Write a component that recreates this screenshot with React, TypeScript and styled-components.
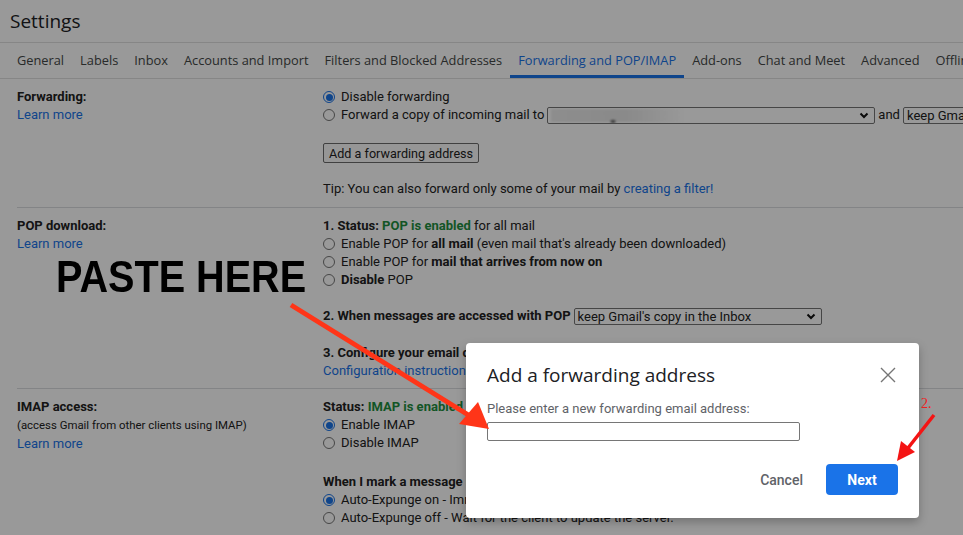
import React from 'react';
import styled, { createGlobalStyle } from 'styled-components';

const GlobalStyle = createGlobalStyle`
  html, body {
    margin: 0;
    padding: 0;
  }
  body {
    font-family: Roboto, "Liberation Sans", Arial, sans-serif;
  }
`;

const Page = styled.div`
  position: relative;
  width: 963px;
  height: 535px;
  overflow: hidden;
  background: #fff;
  color: #222;
  font-size: 13px;
`;

const TitleBar = styled.header`
  height: 42px;
  display: flex;
  align-items: center;
  padding-left: 10px;
  font-family: "Open Sans", sans-serif;
  font-size: 19px;
  color: #202124;
  border-bottom: 1px solid #e0e0e0;
`;

const TabBar = styled.nav`
  display: flex;
  height: 35px;
  padding-left: 9px;
  border-bottom: 1px solid #e0e0e0;
  white-space: nowrap;
`;

const Tab = styled.div<{ $active?: boolean }>`
  display: flex;
  align-items: center;
  padding: 0 8px;
  font-family: "Open Sans", sans-serif;
  font-size: 12.8px;
  color: ${({ $active }) => ($active ? '#1a73e8' : '#444746')};
  border-bottom: 3px solid ${({ $active }) => ($active ? '#1a73e8' : 'transparent')};
  border-top: 2px solid transparent;
`;

const Section = styled.section<{ $top: number; $bottom: number }>`
  display: grid;
  grid-template-columns: 306px 1fr;
  margin-left: 17px;
  padding: ${({ $top, $bottom }) => `${$top}px 0 ${$bottom}px`};
  border-bottom: 1px solid #dadce0;
  line-height: 18px;
  white-space: nowrap;
`;

const Label = styled.div`
  font-weight: bold;
`;

const Note = styled.div`
  font-size: 11.4px;
  line-height: 19px;
`;

const Link = styled.a`
  color: #1a73e8;
  text-decoration: none;
`;

const Green = styled.b`
  color: #1e8e3e;
`;

const Block = styled.div<{ $gap?: number }>`
  margin-top: ${({ $gap }) => $gap || 0}px;
`;

const Option = styled.div`
  display: flex;
  align-items: center;
  height: 18px;
`;

const Radio = styled.span<{ $checked?: boolean }>`
  position: relative;
  flex: none;
  width: 12px;
  height: 12px;
  box-sizing: border-box;
  margin-right: 6px;
  border-radius: 50%;
  background: #fff;
  border: ${({ $checked }) => ($checked ? '1.5px solid #1a73e8' : '1px solid #767676')};

  &::after {
    content: '';
    display: ${({ $checked }) => ($checked ? 'block' : 'none')};
    position: absolute;
    inset: 1.5px;
    border-radius: 50%;
    background: #1a73e8;
  }
`;

const Select = styled.span<{ $width: number }>`
  display: inline-flex;
  align-items: center;
  justify-content: space-between;
  vertical-align: middle;
  box-sizing: border-box;
  width: ${({ $width }) => $width}px;
  height: 17px;
  margin: 0 3px 0 3px;
  padding: 0 5px 0 3px;
  border: 1px solid #767676;
  border-radius: 2px;
  background: #fff;
  font-size: 13px;
  line-height: 15px;
  overflow: hidden;
`;

const Redacted = styled.span`
  position: relative;
  width: 135px;
  height: 13px;
  background: linear-gradient(90deg, #ececec, #e6e6e6 55%, rgba(240, 240, 240, 0));
  filter: blur(1px);

  &::after {
    content: '';
    position: absolute;
    left: 58px;
    bottom: -1px;
    width: 8px;
    height: 3px;
    background: radial-gradient(circle, #666 40%, transparent 70%);
  }
`;

const Button = styled.button`
  height: 20px;
  padding: 0 5px;
  border: 1px solid #6b6b6b;
  border-radius: 2px;
  background: #fafafa;
  color: #222;
  font-family: Roboto, sans-serif;
  font-size: 12.6px;
`;

const PasteHere = styled.div`
  position: relative;
  z-index: 2;
  margin: 2px 0 0 39px;
  font-family: "Liberation Sans", Arial, sans-serif;
  font-weight: bold;
  font-size: 44px;
  line-height: 44px;
  color: #000;
  transform: scaleX(0.9);
  transform-origin: left center;
`;

const Backdrop = styled.div`
  position: absolute;
  inset: 0;
  z-index: 1;
  background: rgba(0, 0, 0, 0.4);
`;

const Dialog = styled.div`
  position: absolute;
  left: 466px;
  top: 343px;
  z-index: 3;
  width: 453px;
  height: 175px;
  box-sizing: border-box;
  padding: 20px 23px 0 21px;
  display: flex;
  flex-direction: column;
  background: #fff;
  border-radius: 4px;
  box-shadow: 0 4px 10px rgba(0, 0, 0, 0.25);
`;

const DialogHead = styled.div`
  display: flex;
  align-items: center;
  justify-content: space-between;
  height: 24px;
`;

const DialogTitle = styled.h2`
  margin: 0;
  font-family: "Open Sans", sans-serif;
  font-weight: normal;
  font-size: 19px;
  color: #202124;
`;

const DialogLabel = styled.div`
  margin-top: 13px;
  font-size: 13px;
  line-height: 18px;
  color: #5f6368;
`;

const TextInput = styled.input`
  display: block;
  width: 313px;
  height: 19px;
  margin-top: 4px;
  box-sizing: border-box;
  border: 1px solid #767676;
  border-radius: 2px;
`;

const Actions = styled.div`
  display: flex;
  justify-content: flex-end;
  align-items: center;
  margin-top: 23px;
  margin-right: -2px;
`;

const CancelButton = styled.button`
  margin-right: 15px;
  padding: 0 8px;
  border: none;
  background: none;
  font-family: Roboto, sans-serif;
  font-size: 14px;
  font-weight: 500;
  color: #5f6368;
`;

const NextButton = styled.button`
  width: 72px;
  height: 31px;
  border: none;
  border-radius: 4px;
  background: #1a73e8;
  color: #fff;
  font-family: Roboto, sans-serif;
  font-size: 14px;
  font-weight: bold;
`;

const Arrows = styled.svg`
  position: absolute;
  left: 0;
  top: 0;
  z-index: 4;
  pointer-events: none;
`;

const StepNumber = styled.span`
  position: absolute;
  left: 921px;
  top: 396px;
  z-index: 4;
  font-family: "Liberation Serif", serif;
  font-size: 14px;
  color: #ee2020;
`;

const Chevron = () => (
  <svg width="10" height="7" viewBox="0 0 10 7">
    <path d="M1.5 1.5l3.5 3.5 3.5-3.5" fill="none" stroke="#111" strokeWidth="2" />
  </svg>
);

const tabs = [
  'General',
  'Labels',
  'Inbox',
  'Accounts and Import',
  'Filters and Blocked Addresses',
  'Forwarding and POP/IMAP',
  'Add-ons',
  'Chat and Meet',
  'Advanced',
  'Offline',
  'Themes',
];

export default function App() {
  return (
    <Page>
      <GlobalStyle />
      <TitleBar>Settings</TitleBar>
      <TabBar>
        {tabs.map((t) => (
          <Tab key={t} $active={t === 'Forwarding and POP/IMAP'}>
            {t}
          </Tab>
        ))}
      </TabBar>

      <Section $top={9} $bottom={9}>
        <div>
          <Label>Forwarding:</Label>
          <Link>Learn more</Link>
        </div>
        <div>
          <Option>
            <Radio $checked />
            Disable forwarding
          </Option>
          <Option>
            <Radio />
            Forward a copy of incoming mail to
            <Select $width={328}>
              <Redacted />
              <Chevron />
            </Select>
            and
            <Select $width={120}>keep Gmail's copy in the Inbox</Select>
          </Option>
          <Block $gap={19}>
            <Button>Add a forwarding address</Button>
          </Block>
          <Block $gap={17}>
            Tip: You can also forward only some of your mail by <Link>creating a filter!</Link>
          </Block>
        </div>
      </Section>

      <Section $top={9} $bottom={8}>
        <div>
          <Label>POP download:</Label>
          <Link>Learn more</Link>
          <PasteHere>PASTE HERE</PasteHere>
        </div>
        <div>
          <div>
            <b>1. Status: </b>
            <Green>POP is enabled</Green> for all mail
          </div>
          <Option>
            <Radio />
            Enable POP for&nbsp;<b>all mail</b>&nbsp;(even mail that's already been downloaded)
          </Option>
          <Option>
            <Radio />
            Enable POP for&nbsp;<b>mail that arrives from now on</b>
          </Option>
          <Option>
            <Radio />
            <b>Disable</b>&nbsp;POP
          </Option>
          <Block $gap={18}>
            <b>2. When messages are accessed with POP</b>
            <Select $width={248}>
              keep Gmail's copy in the Inbox
              <Chevron />
            </Select>
          </Block>
          <Block $gap={19}>
            <b>3. Configure your email client</b> (e.g. Outlook, Eudora, Netscape Mail)
          </Block>
          <div>
            <Link>Configuration instructions</Link>
          </div>
        </div>
      </Section>

      <Section $top={9} $bottom={10}>
        <div>
          <Label>IMAP access:</Label>
          <Note>(access Gmail from other clients using IMAP)</Note>
          <Link>Learn more</Link>
        </div>
        <div>
          <div>
            <b>Status: </b>
            <Green>IMAP is enabled</Green>
          </div>
          <Option>
            <Radio $checked />
            Enable IMAP
          </Option>
          <Option>
            <Radio />
            Disable IMAP
          </Option>
          <Block $gap={21}>
            <b>When I mark a message in IMAP as deleted:</b>
          </Block>
          <Option>
            <Radio $checked />
            Auto-Expunge on - Immediately update the server. (default)
          </Option>
          <Option>
            <Radio />
            Auto-Expunge off - Wait for the client to update the server.
          </Option>
        </div>
      </Section>

      <Backdrop />

      <Dialog>
        <DialogHead>
          <DialogTitle>Add a forwarding address</DialogTitle>
          <svg width="16" height="16" viewBox="0 0 16 16">
            <path d="M1 1l14 14M15 1L1 15" stroke="#757575" strokeWidth="1.4" />
          </svg>
        </DialogHead>
        <DialogLabel>Please enter a new forwarding email address:</DialogLabel>
        <TextInput type="text" />
        <Actions>
          <CancelButton>Cancel</CancelButton>
          <NextButton>Next</NextButton>
        </Actions>
      </Dialog>

      <Arrows width="963" height="535" viewBox="0 0 963 535">
        <line x1="291" y1="305" x2="470" y2="416" stroke="#ff3518" strokeWidth="5" />
        <polygon points="489,429 459,424 478,402" fill="#ff3518" />
        <line x1="934" y1="415" x2="908" y2="448" stroke="#f41414" strokeWidth="3.5" />
        <polygon points="897,461 901,441 915,452" fill="#f41414" />
      </Arrows>
      <StepNumber>2.</StepNumber>
    </Page>
  );
}
